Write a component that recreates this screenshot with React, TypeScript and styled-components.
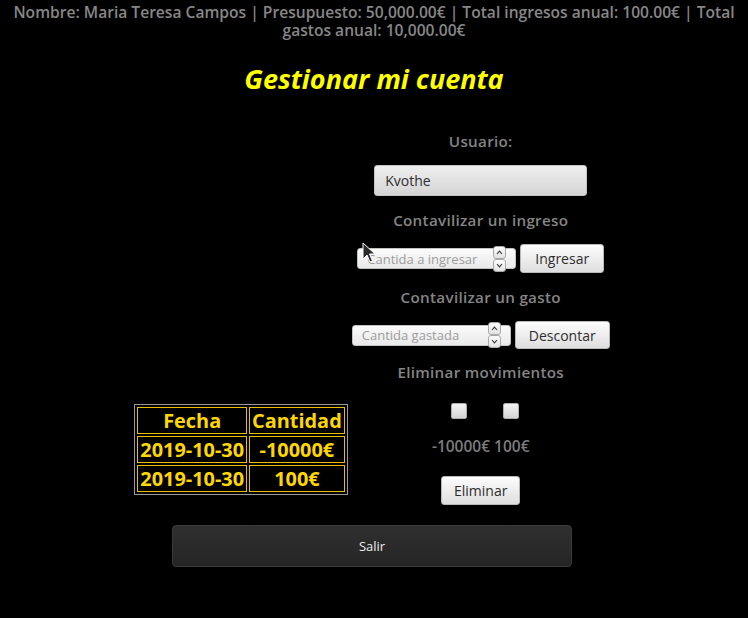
import React from "react";
import styled, {createGlobalStyle} from "styled-components";

const movimientos = [
  {fecha: "2019-10-30", cantidad: "-10000€"},
  {fecha: "2019-10-30", cantidad: "100€"},
];

const GlobalStyle = createGlobalStyle`
  body {
    margin: 0;
    background: #000;
    font-family: "Open Sans", "DejaVu Sans", sans-serif;
  }
`;

const Chevron = ({up}: {up?: boolean}) => (
  <svg width="7" height="5" viewBox="0 0 7 5">
    <path d={up ? "M1 4 L3.5 1.2 L6 4" : "M1 1 L3.5 3.8 L6 1"} fill="none" stroke="#333" strokeWidth="1.1"/>
  </svg>
);

const NumberInput = ({placeholder}: {placeholder: string}) => (
  <NumberField>
    <Placeholder>{placeholder}</Placeholder>
    <Spinner>
      <SpinButton><Chevron up/></SpinButton>
      <SpinButton><Chevron/></SpinButton>
    </Spinner>
  </NumberField>
);

const App = () => {
  return (
    <Page>
      <GlobalStyle/>
      <Summary>
        Nombre: Maria Teresa Campos | Presupuesto: 50,000.00€ | Total ingresos anual: 100.00€ | Total gastos anual: 10,000.00€
      </Summary>
      <Title>Gestionar mi cuenta</Title>
      <Main>
        <Table>
          <tbody>
          <tr>
            <Cell>Fecha</Cell>
            <Cell>Cantidad</Cell>
          </tr>
          {movimientos.map((m, key) => (
            <tr key={key}>
              <Cell>{m.fecha}</Cell>
              <Cell>{m.cantidad}</Cell>
            </tr>
          ))}
          </tbody>
        </Table>
        <Column>
          <Label>Usuario:</Label>
          <UserInput>Kvothe</UserInput>
          <Label>Contavilizar un ingreso</Label>
          <Row>
            <NumberInput placeholder="Cantida a ingresar"/>
            <Button>Ingresar</Button>
          </Row>
          <Label>Contavilizar un gasto</Label>
          <Row>
            <NumberInput placeholder="Cantida gastada"/>
            <Button $height={28} $pad={13}>Descontar</Button>
          </Row>
          <Label $top={-1}>Eliminar movimientos</Label>
          <CheckRow>
            <Check/>
            <Check/>
          </CheckRow>
          <Amounts>-10000€ 100€</Amounts>
          <DeleteButton>Eliminar</DeleteButton>
        </Column>
      </Main>
      <ExitButton>Salir</ExitButton>
      <Pointer width="14" height="21" viewBox="0 0 14 21">
        <path d="M1 1 L1 17 L5 13 L8 20 L10.5 19 L7.5 12 L13 12 Z" fill="#2a2a2a" stroke="#fff" strokeWidth="1"
              strokeLinejoin="round"/>
      </Pointer>
    </Page>
  );
}

const Page = styled.div`
  position: relative;
  min-height: 618px;
  background: #000;
  overflow: hidden;
`

const Summary = styled.p`
  margin: 3px 6px 0;
  text-align: center;
  color: #878787;
  font-family: "Open Sans", sans-serif;
  font-weight: 600;
  font-size: 15.6px;
  line-height: 18px;
`

const Title = styled.h1`
  margin: 24px 0 0;
  text-align: center;
  color: #ffff00;
  font-style: italic;
  font-weight: 700;
  font-size: 27px;
  line-height: 32px;
`

const Main = styled.div`
  display: flex;
  justify-content: center;
  align-items: flex-end;
`

const Table = styled.table`
  border: 1px solid #9a9a9a;
  border-spacing: 2px;
  margin-bottom: 10px;
`

const Cell = styled.td`
  border: 1px solid #e6bf00;
  padding: 1px 2px;
  color: #ffd700;
  font-weight: 700;
  font-size: 19.9px;
  line-height: 23px;
  text-align: center;
`

const Column = styled.div`
  width: 266px;
  display: flex;
  flex-direction: column;
  align-items: center;
  gap: 15px;
  padding-top: 37px;
`

const Label = styled.p<{ $top?: number }>`
  margin: ${({$top}) => $top || 0}px 0 0;
  color: #858585;
  font-weight: 600;
  font-size: 15.2px;
  line-height: 18px;
  letter-spacing: 0.3px;
`

const UserInput = styled.div`
  box-sizing: border-box;
  width: 213px;
  height: 31px;
  padding-left: 10px;
  display: flex;
  align-items: center;
  border: 1px solid #c4c4c4;
  border-radius: 3px;
  background: linear-gradient(to bottom, #efefef, #d4d4d4);
  color: #2e2e2e;
  font-size: 14px;
`

const Row = styled.div`
  display: flex;
  align-items: center;
  gap: 4px;
`

const NumberField = styled.div`
  box-sizing: border-box;
  width: 159px;
  height: 21px;
  display: flex;
  align-items: center;
  border: 1px solid #c2c2c2;
  border-radius: 3px;
  background: linear-gradient(to bottom, #fbfbfb, #e9e9e9);
`

const Placeholder = styled.span`
  flex: 1;
  padding-left: 9px;
  color: #9d9d9d;
  font-size: 13px;
  white-space: nowrap;
  overflow: hidden;
`

const Spinner = styled.div`
  display: flex;
  flex-direction: column;
  margin-right: 9px;
`

const SpinButton = styled.div`
  box-sizing: border-box;
  width: 13px;
  height: 13px;
  display: flex;
  align-items: center;
  justify-content: center;
  border: 1px solid #a9a9a9;
  border-radius: 3px;
  background: linear-gradient(to bottom, #fdfdfd, #e2e2e2);
`

const Button = styled.button<{ $height?: number; $pad?: number }>`
  box-sizing: border-box;
  height: ${({$height}) => $height || 29}px;
  padding: 0 ${({$pad}) => $pad ?? 14}px;
  border: 1px solid #b8b8b8;
  border-radius: 3px;
  background: linear-gradient(to bottom, #fdfdfd, #dedede);
  color: #2e2e2e;
  font-family: "Open Sans", sans-serif;
  font-size: 14px;
`

const CheckRow = styled.div`
  display: flex;
  gap: 36px;
  padding-top: 7px;
  margin-left: 9px;
`

const Check = styled.div`
  box-sizing: border-box;
  width: 16px;
  height: 16px;
  border: 1px solid #adadad;
  border-radius: 2px;
  background: linear-gradient(to bottom, #f4f4f4, #d3d3d3);
`

const Amounts = styled.p`
  margin: 3px 0 0;
  color: #7c7c7c;
  font-weight: 600;
  font-size: 15.5px;
  line-height: 18px;
`

const DeleteButton = styled(Button)`
  width: 79px;
  padding: 0;
  margin-top: 6px;
`

const ExitButton = styled.button`
  display: block;
  box-sizing: border-box;
  width: 400px;
  height: 42px;
  margin: 20px auto 0;
  position: relative;
  left: -2px;
  border: 1px solid #3b3b3b;
  border-radius: 4px;
  background: linear-gradient(to bottom, #2f2f2f, #252525);
  color: #ececec;
  font-family: "Open Sans", sans-serif;
  font-size: 13px;
`

const Pointer = styled.svg`
  position: absolute;
  left: 362px;
  top: 242px;
`

export default App;
